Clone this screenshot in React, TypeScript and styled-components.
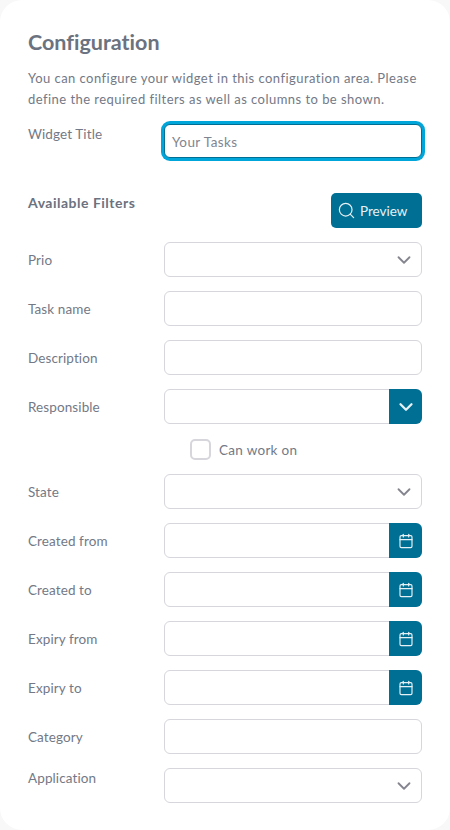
import { ReactNode } from "react";
import styled, { createGlobalStyle } from "styled-components";
import { Calendar, ChevronDown, Search } from "lucide-react";

const GlobalStyle = createGlobalStyle`
  html, body {
    margin: 0;
    padding: 0;
    background: #f8f8f9;
    font-family: "Lato", "Noto Sans", sans-serif;
    font-variant-ligatures: none;
    overflow: hidden;
  }
  * {
    box-sizing: border-box;
  }
`;

const Card = styled.div`
  width: 450px;
  height: 830px;
  background: #ffffff;
  border-radius: 22px;
  padding: 29px 28px 0;
  color: #737986;
`;

const Title = styled.h2`
  margin: 0 0 12px;
  font-size: 21.5px;
  line-height: 27px;
  font-weight: 700;
  color: #6b7280;
`;

const Intro = styled.p`
  margin: 0 0 14px;
  font-size: 13px;
  line-height: 21px;
  letter-spacing: 0.46px;
  width: 394px;
`;

const Row = styled.div<{ $gap?: number }>`
  display: grid;
  grid-template-columns: 136px 258px;
  margin-bottom: ${(p) => p.$gap ?? 14}px;
`;

const Label = styled.label<{ $top?: boolean }>`
  font-size: 13.5px;
  line-height: 20px;
  letter-spacing: 0.1px;
  align-self: ${(p) => (p.$top ? "start" : "center")};
`;

const SectionLabel = styled(Label)`
  font-size: 14px;
  letter-spacing: 0.5px;
  font-weight: 700;
  color: #6b7280;
`;

const Field = styled.div<{ $focus?: boolean }>`
  display: flex;
  align-items: center;
  height: ${(p) => (p.$focus ? 34 : 35)}px;
  background: #ffffff;
  border: 1px solid ${(p) => (p.$focus ? "#006f94" : "#d6d6dc")};
  border-radius: 6px;
  box-shadow: ${(p) => (p.$focus ? "0 0 0 3px #00a5d9" : "none")};
`;

const FieldText = styled.span`
  flex: 1;
  padding: 1px 0 0 7px;
  font-size: 13.5px;
  letter-spacing: 0.4px;
  color: #7f8590;
`;

const Caret = styled.span`
  display: flex;
  margin-right: 6px;
  color: #85858f;
`;

const Addon = styled.span`
  display: flex;
  align-items: center;
  justify-content: center;
  width: 33px;
  align-self: stretch;
  margin: -1px -1px -1px 0;
  background: #006f94;
  border-radius: 0 6px 6px 0;
  color: #e6f1f5;
`;

const PreviewButton = styled.button`
  justify-self: end;
  display: flex;
  align-items: center;
  gap: 4px;
  width: 91px;
  height: 35px;
  padding: 0 0 0 6px;
  border: 0;
  border-radius: 5px;
  background: #006f94;
  color: #e6f1f5;
  font-family: inherit;
  font-size: 13.5px;
`;

const CheckRow = styled.div`
  display: flex;
  align-items: center;
  gap: 8px;
  height: 21px;
  margin: 15px 0 14px 162px;
  font-size: 13.5px;
  letter-spacing: 0.3px;
`;

const CheckBox = styled.span`
  width: 21px;
  height: 21px;
  border: 2px solid #d6d6dc;
  border-radius: 5px;
`;

type FilterProps = {
  label: string;
  top?: boolean;
  children?: ReactNode;
};

function Filter({ label, top, children }: FilterProps) {
  return (
    <Row>
      <Label $top={top}>{label}</Label>
      <Field>{children}</Field>
    </Row>
  );
}

const SelectCaret = () => (
  <>
    <FieldText />
    <Caret>
      <ChevronDown size={22} strokeWidth={2} />
    </Caret>
  </>
);

const DateAddon = () => (
  <>
    <FieldText />
    <Addon>
      <Calendar size={16} strokeWidth={1.75} />
    </Addon>
  </>
);

export default function App() {
  return (
    <>
      <GlobalStyle />
      <Card>
        <Title>Configuration</Title>
        <Intro>
          You can configure your widget in this configuration area. Please
          define the required filters as well as columns to be shown.
        </Intro>
        <Row $gap={35}>
          <Label $top>Widget Title</Label>
          <Field $focus>
            <FieldText>Your Tasks</FieldText>
          </Field>
        </Row>
        <Row>
          <SectionLabel $top>Available Filters</SectionLabel>
          <PreviewButton>
            <Search size={19} strokeWidth={1.5} />
            Preview
          </PreviewButton>
        </Row>
        <Filter label="Prio">
          <SelectCaret />
        </Filter>
        <Filter label="Task name" />
        <Filter label="Description" />
        <Row $gap={0}>
          <Label>Responsible</Label>
          <Field>
            <FieldText />
            <Addon>
              <ChevronDown size={22} strokeWidth={2.5} />
            </Addon>
          </Field>
        </Row>
        <CheckRow>
          <CheckBox />
          Can work on
        </CheckRow>
        <Filter label="State">
          <SelectCaret />
        </Filter>
        <Filter label="Created from">
          <DateAddon />
        </Filter>
        <Filter label="Created to">
          <DateAddon />
        </Filter>
        <Filter label="Expiry from">
          <DateAddon />
        </Filter>
        <Filter label="Expiry to">
          <DateAddon />
        </Filter>
        <Filter label="Category" />
        <Filter label="Application" top>
          <SelectCaret />
        </Filter>
      </Card>
    </>
  );
}
